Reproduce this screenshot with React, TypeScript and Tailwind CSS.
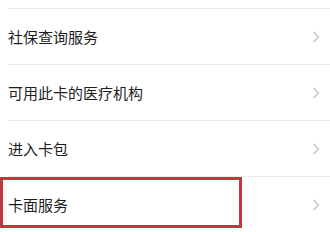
import React from "react";

const items = ["社保查询服务", "可用此卡的医疗机构", "进入卡包", "卡面服务"];

function Chevron() {
  return (
    <svg width="8" height="14" viewBox="0 0 8 14" className="mr-[10px]">
      <polyline points="1.5,2 6.5,7 1.5,12" fill="none" stroke="#c4c4c4" strokeWidth="1.3" />
    </svg>
  );
}

export default function App() {
  return (
    <div
      className="relative w-[330px] h-[232px] overflow-hidden bg-white"
      style={{ fontFamily: '"Noto Sans CJK SC", "Noto Sans", sans-serif' }}
    >
      <div className="h-[8px]" />
      {items.map((t) => (
        <div key={t} className="ml-[8px] border-t border-[#ececec] h-[56px] flex items-center justify-between">
          <span className="text-[15px] text-[#1e1e1e] leading-none">{t}</span>
          <Chevron />
        </div>
      ))}
      <div className="absolute left-0 top-[177px] w-[242px] h-[51px] border-[3px] border-[#c3353b]" />
    </div>
  );
}
